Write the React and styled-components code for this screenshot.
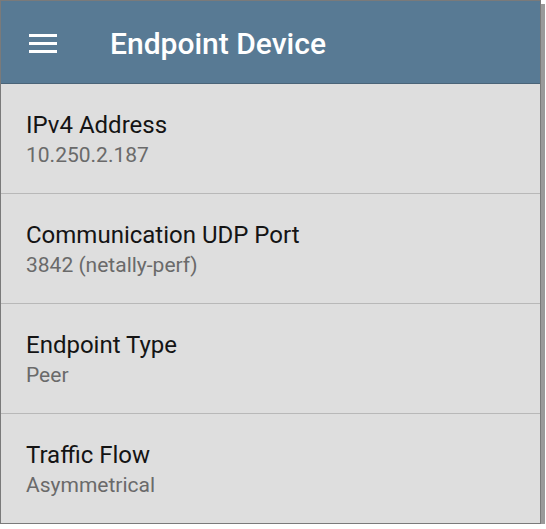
import React from 'react';
import styled, { createGlobalStyle } from 'styled-components';

const GlobalStyle = createGlobalStyle`
  html, body {
    margin: 0;
    padding: 0;
    background: #ffffff;
  }
  body {
    font-family: Roboto, "Noto Sans", "Liberation Sans", sans-serif;
  }
`;

const Frame = styled.div`
  width: 539px;
  border: 1px solid #7a7a7a;
  box-shadow: 4px 4px 0 #9a9a9a;
  background-color: #dedede;
`;

const Header = styled.header`
  height: 82px;
  display: flex;
  align-items: center;
  background-color: #587a94;
  border-bottom: 1px solid #4a6478;
`;

const MenuButton = styled.div`
  width: 28px;
  margin-left: 28px;
  margin-right: 53px;
  margin-top: 2px;
  display: flex;
  flex-direction: column;
  gap: 5px;

  span {
    display: block;
    height: 3px;
    background: #ffffff;
  }
`;

const Title = styled.h1`
  margin: 2px 0 0;
  font-size: 30px;
  font-weight: 500;
  color: #ffffff;
`;

const Row = styled.div`
  box-sizing: border-box;
  height: ${p => (p.$last ? '109px' : '110px')};
  padding: 3px 0 0 25px;
  display: flex;
  flex-direction: column;
  justify-content: center;
  border-bottom: ${p => (p.$last ? 'none' : '1px solid #b8b8b8')};
`;

const Label = styled.div`
  font-size: 24px;
  color: #141414;
  line-height: 30px;
`;

const Value = styled.div`
  font-size: 21px;
  color: #6a6a6a;
  line-height: 30px;
`;

const items = [
  { label: 'IPv4 Address', value: '10.250.2.187' },
  { label: 'Communication UDP Port', value: '3842 (netally-perf)' },
  { label: 'Endpoint Type', value: 'Peer' },
  { label: 'Traffic Flow', value: 'Asymmetrical' },
];

const App = () => (
  <>
    <GlobalStyle />
    <Frame>
      <Header>
        <MenuButton>
          <span />
          <span />
          <span />
        </MenuButton>
        <Title>Endpoint Device</Title>
      </Header>
      {items.map((item, i) => (
        <Row key={item.label} $last={i === items.length - 1}>
          <Label>{item.label}</Label>
          <Value>{item.value}</Value>
        </Row>
      ))}
    </Frame>
  </>
);

export default App;
